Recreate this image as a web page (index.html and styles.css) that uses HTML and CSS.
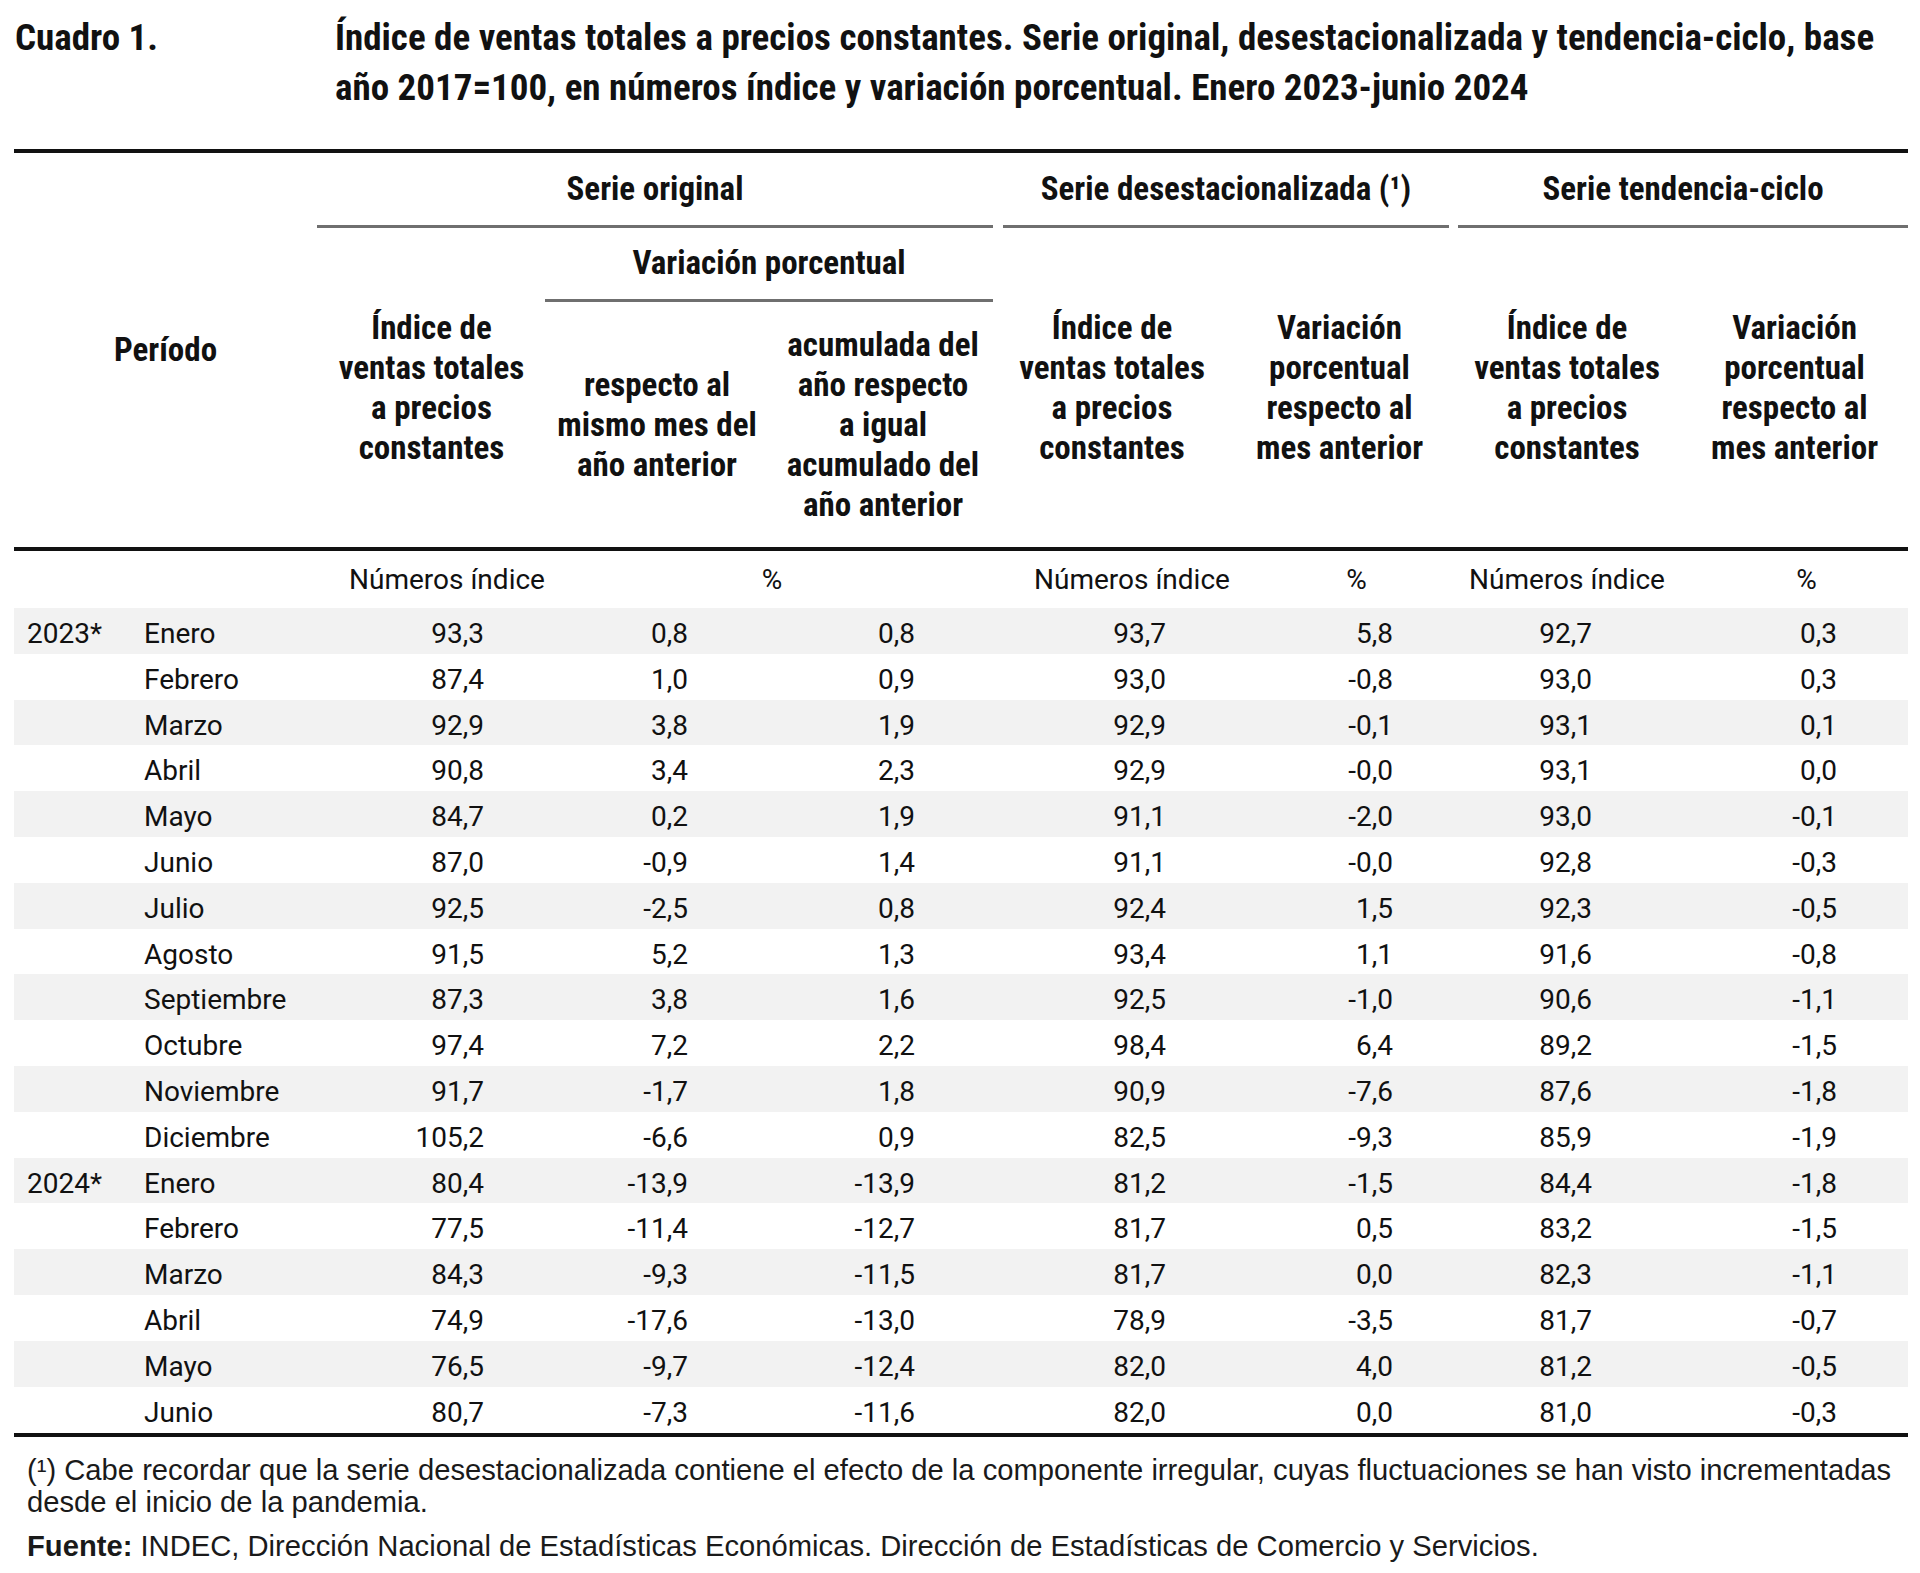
FILE: index.html
```html
<!DOCTYPE html>
<html lang="es">
<head>
<meta charset="utf-8">
<title>Cuadro 1</title>
<link rel="stylesheet" href="styles.css">
</head>
<body>
<div class="page">
  <div class="title">
    <div class="title-num">Cuadro 1.</div>
    <div class="title-text">Índice de ventas totales a precios constantes. Serie original, desestacionalizada y tendencia-ciclo, base<br>año 2017=100, en números índice y variación porcentual. Enero 2023-junio 2024</div>
  </div>

  <table class="tbl">
    <colgroup>
      <col class="w-year"><col class="w-month"><col class="w-c1"><col class="w-c2"><col class="w-c3"><col class="w-c4"><col class="w-c5"><col class="w-c6"><col class="w-c7">
    </colgroup>
    <thead>
      <tr class="hr-a">
        <th rowspan="3" colspan="2" class="h-period">Período</th>
        <th colspan="3" class="h-grp"><div class="grp grp-orig">Serie original</div></th>
        <th colspan="2" class="h-grp"><div class="grp grp-des">Serie desestacionalizada (¹)</div></th>
        <th colspan="2" class="h-grp"><div class="grp grp-ten">Serie tendencia-ciclo</div></th>
      </tr>
      <tr class="hr-b">
        <th rowspan="2" class="h-col">Índice de<br>ventas totales<br>a precios<br>constantes</th>
        <th colspan="2" class="h-grp"><div class="grp grp-var">Variación porcentual</div></th>
        <th rowspan="2" class="h-col">Índice de<br>ventas totales<br>a precios<br>constantes</th>
        <th rowspan="2" class="h-col">Variación<br>porcentual<br>respecto al<br>mes anterior</th>
        <th rowspan="2" class="h-col">Índice de<br>ventas totales<br>a precios<br>constantes</th>
        <th rowspan="2" class="h-col">Variación<br>porcentual<br>respecto al<br>mes anterior</th>
      </tr>
      <tr class="hr-c">
        <th class="h-col">respecto al<br>mismo mes del<br>año anterior</th>
        <th class="h-col">acumulada del<br>año respecto<br>a igual<br>acumulado del<br>año anterior</th>
      </tr>
    </thead>
    <tbody>
      <tr class="units">
        <td colspan="2"></td>
        <td class="u u1">Números índice</td>
        <td colspan="2" class="u u23">%</td>
        <td class="u u4">Números índice</td>
        <td class="u u5">%</td>
        <td class="u u6">Números índice</td>
        <td class="u u7">%</td>
      </tr>
      <tr class="odd"><td class="yr">2023*</td><td class="mo">Enero</td><td class="n n1">93,3</td><td class="n n2">0,8</td><td class="n n3">0,8</td><td class="n n4">93,7</td><td class="n n5">5,8</td><td class="n n6">92,7</td><td class="n n7">0,3</td></tr>
      <tr><td class="yr"></td><td class="mo">Febrero</td><td class="n n1">87,4</td><td class="n n2">1,0</td><td class="n n3">0,9</td><td class="n n4">93,0</td><td class="n n5">-0,8</td><td class="n n6">93,0</td><td class="n n7">0,3</td></tr>
      <tr class="odd"><td class="yr"></td><td class="mo">Marzo</td><td class="n n1">92,9</td><td class="n n2">3,8</td><td class="n n3">1,9</td><td class="n n4">92,9</td><td class="n n5">-0,1</td><td class="n n6">93,1</td><td class="n n7">0,1</td></tr>
      <tr><td class="yr"></td><td class="mo">Abril</td><td class="n n1">90,8</td><td class="n n2">3,4</td><td class="n n3">2,3</td><td class="n n4">92,9</td><td class="n n5">-0,0</td><td class="n n6">93,1</td><td class="n n7">0,0</td></tr>
      <tr class="odd"><td class="yr"></td><td class="mo">Mayo</td><td class="n n1">84,7</td><td class="n n2">0,2</td><td class="n n3">1,9</td><td class="n n4">91,1</td><td class="n n5">-2,0</td><td class="n n6">93,0</td><td class="n n7">-0,1</td></tr>
      <tr><td class="yr"></td><td class="mo">Junio</td><td class="n n1">87,0</td><td class="n n2">-0,9</td><td class="n n3">1,4</td><td class="n n4">91,1</td><td class="n n5">-0,0</td><td class="n n6">92,8</td><td class="n n7">-0,3</td></tr>
      <tr class="odd"><td class="yr"></td><td class="mo">Julio</td><td class="n n1">92,5</td><td class="n n2">-2,5</td><td class="n n3">0,8</td><td class="n n4">92,4</td><td class="n n5">1,5</td><td class="n n6">92,3</td><td class="n n7">-0,5</td></tr>
      <tr><td class="yr"></td><td class="mo">Agosto</td><td class="n n1">91,5</td><td class="n n2">5,2</td><td class="n n3">1,3</td><td class="n n4">93,4</td><td class="n n5">1,1</td><td class="n n6">91,6</td><td class="n n7">-0,8</td></tr>
      <tr class="odd"><td class="yr"></td><td class="mo">Septiembre</td><td class="n n1">87,3</td><td class="n n2">3,8</td><td class="n n3">1,6</td><td class="n n4">92,5</td><td class="n n5">-1,0</td><td class="n n6">90,6</td><td class="n n7">-1,1</td></tr>
      <tr><td class="yr"></td><td class="mo">Octubre</td><td class="n n1">97,4</td><td class="n n2">7,2</td><td class="n n3">2,2</td><td class="n n4">98,4</td><td class="n n5">6,4</td><td class="n n6">89,2</td><td class="n n7">-1,5</td></tr>
      <tr class="odd"><td class="yr"></td><td class="mo">Noviembre</td><td class="n n1">91,7</td><td class="n n2">-1,7</td><td class="n n3">1,8</td><td class="n n4">90,9</td><td class="n n5">-7,6</td><td class="n n6">87,6</td><td class="n n7">-1,8</td></tr>
      <tr><td class="yr"></td><td class="mo">Diciembre</td><td class="n n1">105,2</td><td class="n n2">-6,6</td><td class="n n3">0,9</td><td class="n n4">82,5</td><td class="n n5">-9,3</td><td class="n n6">85,9</td><td class="n n7">-1,9</td></tr>
      <tr class="odd"><td class="yr">2024*</td><td class="mo">Enero</td><td class="n n1">80,4</td><td class="n n2">-13,9</td><td class="n n3">-13,9</td><td class="n n4">81,2</td><td class="n n5">-1,5</td><td class="n n6">84,4</td><td class="n n7">-1,8</td></tr>
      <tr><td class="yr"></td><td class="mo">Febrero</td><td class="n n1">77,5</td><td class="n n2">-11,4</td><td class="n n3">-12,7</td><td class="n n4">81,7</td><td class="n n5">0,5</td><td class="n n6">83,2</td><td class="n n7">-1,5</td></tr>
      <tr class="odd"><td class="yr"></td><td class="mo">Marzo</td><td class="n n1">84,3</td><td class="n n2">-9,3</td><td class="n n3">-11,5</td><td class="n n4">81,7</td><td class="n n5">0,0</td><td class="n n6">82,3</td><td class="n n7">-1,1</td></tr>
      <tr><td class="yr"></td><td class="mo">Abril</td><td class="n n1">74,9</td><td class="n n2">-17,6</td><td class="n n3">-13,0</td><td class="n n4">78,9</td><td class="n n5">-3,5</td><td class="n n6">81,7</td><td class="n n7">-0,7</td></tr>
      <tr class="odd"><td class="yr"></td><td class="mo">Mayo</td><td class="n n1">76,5</td><td class="n n2">-9,7</td><td class="n n3">-12,4</td><td class="n n4">82,0</td><td class="n n5">4,0</td><td class="n n6">81,2</td><td class="n n7">-0,5</td></tr>
      <tr class="last"><td class="yr"></td><td class="mo">Junio</td><td class="n n1">80,7</td><td class="n n2">-7,3</td><td class="n n3">-11,6</td><td class="n n4">82,0</td><td class="n n5">0,0</td><td class="n n6">81,0</td><td class="n n7">-0,3</td></tr>
    </tbody>
  </table>

  <div class="notes">
    <p class="note">(¹) Cabe recordar que la serie desestacionalizada contiene el efecto de la componente irregular, cuyas fluctuaciones se han visto incrementadas<br>desde el inicio de la pandemia.</p>
    <p class="source"><b>Fuente:</b> INDEC, Dirección Nacional de Estadísticas Económicas. Dirección de Estadísticas de Comercio y Servicios.</p>
  </div>
</div>
</body>
</html>
```
FILE: styles.css
```css
html, body {
  margin: 0;
  padding: 0;
  background: #ffffff;
}

.page {
  width: 1920px;
  padding: 13px 12px 0 14px;
  box-sizing: border-box;
  color: #111111;
  font-family: "Roboto", "Liberation Sans", sans-serif;
  font-stretch: 75%;
}

/* ---------- title ---------- */
.title {
  display: flex;
  font-weight: 750;
  font-size: 37px;
  font-stretch: 82%;
  line-height: 50px;
  height: 100px;
  margin-bottom: 36px;
  white-space: nowrap;
}

.title-num {
  width: 320px;
  padding-left: 1px;
}

/* ---------- table ---------- */
.tbl {
  width: 1894px;
  table-layout: fixed;
  border-collapse: separate;
  border-spacing: 0;
  border-top: 4px solid #111111;
}

.w-year { width: 120px; }
.w-month { width: 183px; }
.w-c1 { width: 229px; }
.w-c2 { width: 222px; }
.w-c3 { width: 230px; }
.w-c4 { width: 228px; }
.w-c5 { width: 227px; }
.w-c6 { width: 228px; }
.w-c7 { width: 227px; }

th {
  padding: 0;
  font-weight: 750;
  font-size: 33px;
  font-stretch: 82%;
  line-height: 40px;
  text-align: center;
  white-space: nowrap;
}

.hr-a { height: 75px; }
.hr-b { height: 74px; }
.hr-c { height: 245px; }

.h-grp { vertical-align: bottom; }

.grp {
  padding-bottom: 16px;
  border-bottom: 3px solid #6f6f6f;
}

.grp-orig { margin-right: 5px; }
.grp-des { margin-left: 5px; margin-right: 4px; }
.grp-ten { margin-left: 5px; }
.grp-var { margin-left: -1px; margin-right: 5px; }

.h-period { vertical-align: middle; }
.h-col { vertical-align: middle; }

td {
  padding: 0;
  font-size: 28px;
  font-weight: 430;
  font-stretch: 90%;
  line-height: 32px;
  white-space: nowrap;
}

tbody tr { height: 45.8px; }
tbody td {
  padding-top: 10px;
  vertical-align: top;
}

tbody tr.units { height: 61px; }
tbody tr.units td {
  border-top: 4px solid #111111;
  padding-top: 1px;
  line-height: 40px;
  text-align: center;
  vertical-align: middle;
}

.u1 { padding-left: 31px; }
.u23 { padding-left: 0; }
.u4 { padding-left: 36px; }
.u5 { padding-left: 34px; }
.u6 { padding-left: 0; }
.u7 { padding-left: 24px; }

tr.odd td { background: #f2f2f2; }

tbody tr.last { height: 50.5px; }
tr.last td { border-bottom: 4px solid #111111; }

.yr { padding-left: 13px; }
.mo { padding-left: 10px; }

.n { text-align: right; }
.n1 { padding-right: 62px; }
.n2 { padding-right: 80px; }
.n3 { padding-right: 83px; }
.n4 { padding-right: 60px; }
.n5 { padding-right: 60px; }
.n6 { padding-right: 89px; }
.n7 { padding-right: 71px; }

/* ---------- notes ---------- */
.notes {
  padding-left: 13px;
  font-family: "Liberation Sans", "Arial", sans-serif;
  font-stretch: 100%;
  font-size: 29.2px;
  color: #1a1a1a;
  white-space: nowrap;
}

.note {
  margin: 17px 0 0;
  line-height: 32px;
}

.source {
  margin: 12px 0 0;
  line-height: 32px;
}
```
